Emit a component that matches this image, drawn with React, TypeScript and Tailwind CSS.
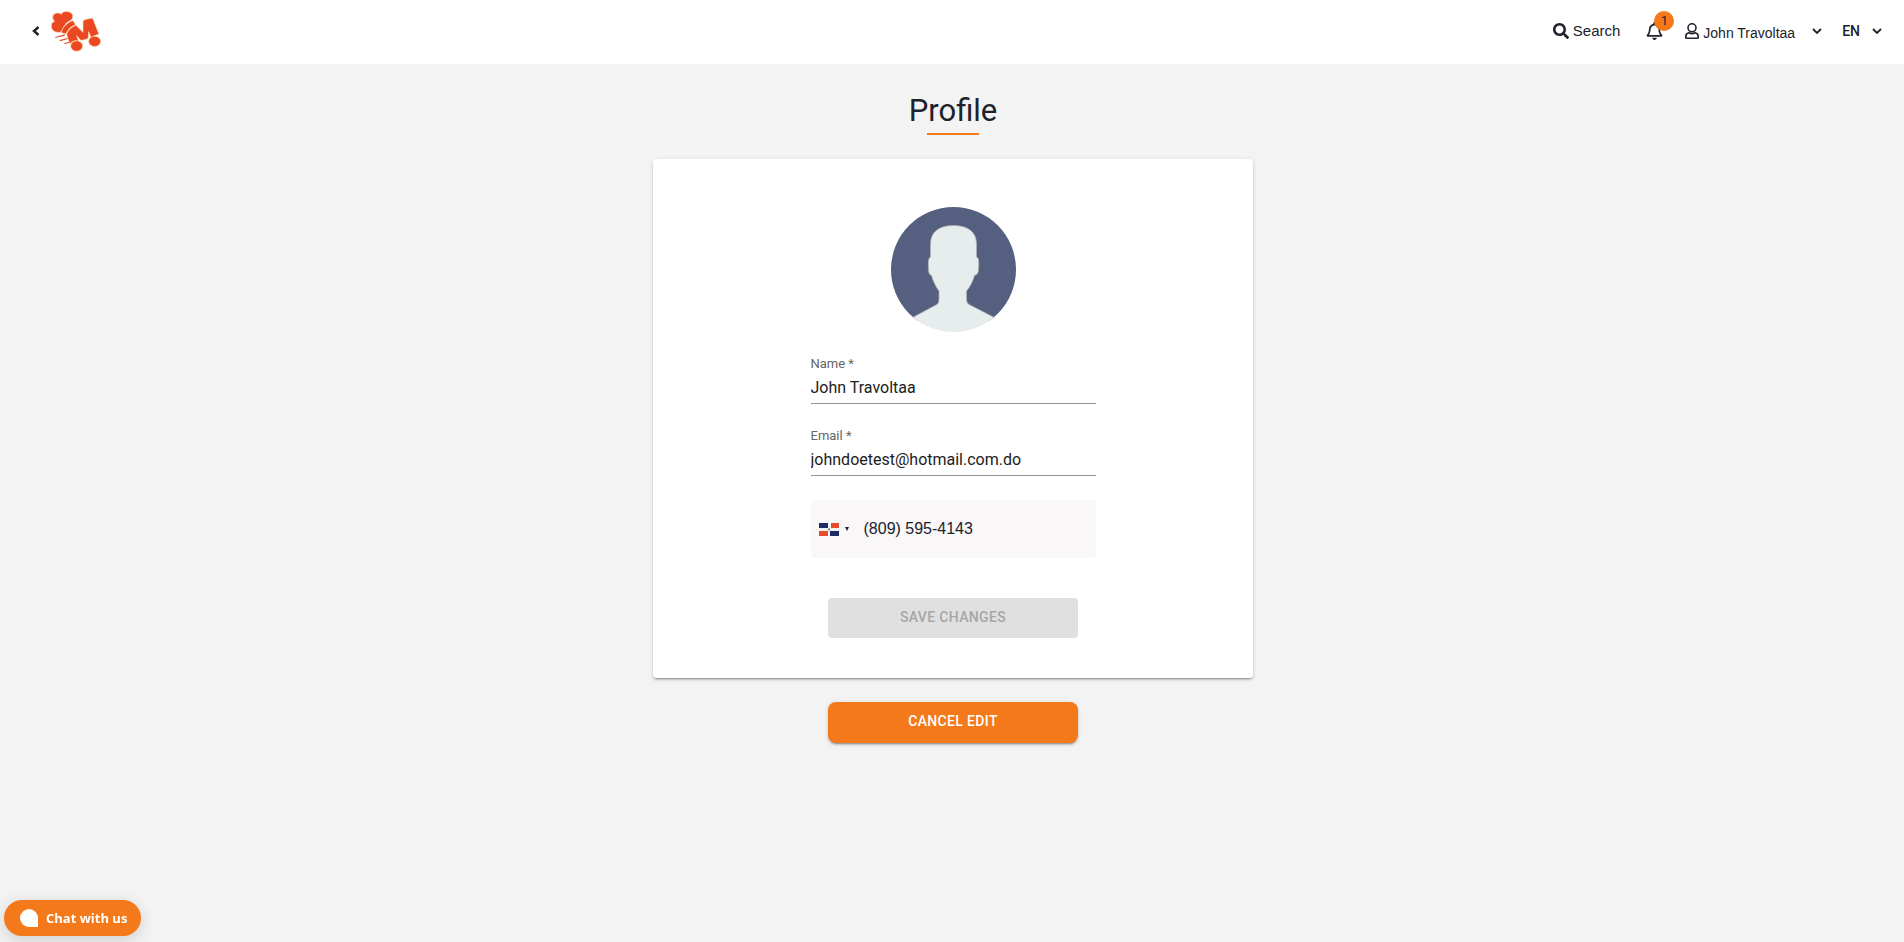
import React, { useState } from 'react';

const Caret = () => (
  <svg viewBox="0 0 10 6" className="h-[6px] w-[10px]" fill="none" stroke="#20222b" strokeWidth="1.800" aria-hidden="true">
    <path d="M1 1l4 4 4-4" />
  </svg>
);

const Logo = () => (
  <svg viewBox="0 0 150 123" className="h-[41px] w-[50px]" fill="#e94823" aria-hidden="true">
    <g stroke="#fbdcae" strokeWidth="2" strokeLinejoin="round">
      <path d="M6 24C2 12 12 5 22 6C26 6 29 8 31 10C33 3 42 0 50 2C60 3 67 9 65 18C64 24 61 27 57 29L46 36L38 48C34 57 31 62 27 64C14 65 3 60 1 48C0 39 4 33 11 31C8 29 7 27 6 24Z" />
      <path d="M31 63C35 49 47 36 64 29C69 32 71 35 73 41C60 46 51 55 45 68C38 68 34 67 31 63Z" />
      <path d="M47 69C51 59 62 47 75 43L96 64L96 30C98 27 106 25 120 22C125 21 127 24 128 29L144 70C133 72 126 76 121 82L113 62L112 82C104 86 96 88 89 88L77 74L83 91C72 87 63 91 57 98C52 88 49 78 47 69Z" />
      <ellipse cx="77" cy="105" rx="18" ry="15.500" />
      <ellipse cx="131" cy="91" rx="18" ry="15.500" />
    </g>
    <path d="M13 78l29-8-1 4-28 7zM26 87l24-6-1 4-23 6zM40 96l14-3 1 3-14 3z" />
  </svg>
);

const Avatar = () => (
  <svg viewBox="0 0 125 125" className="mx-auto block size-[125px]" role="img" aria-label="Profile photo">
    <clipPath id="disc">
      <circle cx="62.500" cy="62.500" r="62.500" />
    </clipPath>
    <g clipPath="url(#disc)">
      <path fill="#556080" d="M0 0h125v114H0z" />
      <path
        d="M39.500 50V37C39.500 25 48 18.500 62.500 18.500S85.500 25 85.500 37V50C88 51 88 54 87.500 62C87.500 66 86 68 83.500 68.500C82 74 79 80 75.500 84V92C75.500 96 77 97 80 98.500L110 114V130H15V114L44 98.500C47 97 48 96 48 92V84C45 80 42 74 40.500 68.500C38.500 68 37.500 66 37.500 62C37 54 37.500 51 39.500 50Z"
        fill="#e7eced"
        stroke="#b3b3b0"
        strokeWidth=".7"
      />
    </g>
  </svg>
);

const Flag = () => (
  <svg viewBox="0 0 20 13" className="h-[13px] w-[20px]" aria-hidden="true">
    <path fill="#f3f1f0" d="M0 0h20v13H0z" />
    <path fill="#1e2b69" d="M0 0h9v5H0zM11 8h9v5h-9z" />
    <path fill="#e94c2b" d="M12 0h8v5h-8zM0 8h9v5H0z" />
    <path fill="#70806c" d="M9.300 5.500h1.700v2H9.300z" />
  </svg>
);

type FieldProps = { id: string; label: string; type: string; value: string; onChange: (v: string) => void };

const Field = ({ id, label, type, value, onChange }: FieldProps) => (
  <div className="mb-6 h-12 border-b border-[#949494]">
    <label htmlFor={id} className="block text-[13px] leading-4 text-[#666]">
      {label} *
    </label>
    <input
      id={id}
      type={type}
      value={value}
      onChange={(e) => onChange(e.target.value)}
      className="mt-1 block h-6 w-full bg-transparent text-base text-[#212121] outline-none"
    />
  </div>
);

export default function App() {
  const [name, setName] = useState('John Travoltaa');
  const [email, setEmail] = useState('johndoetest@hotmail.com.do');
  const [phone, setPhone] = useState('(809) 595-4143');

  return (
    <div className="flex min-h-screen flex-col bg-[#f3f3f3] font-['Roboto',sans-serif] text-[#20222b]">
      <header className="flex h-16 items-center justify-between bg-white pr-[22px] pb-[2px] pl-8">
        <div className="flex items-center gap-[11px]">
          <button type="button" aria-label="Back">
            <svg viewBox="0 0 8 10" className="h-[10px] w-[8px]" fill="none" stroke="#20222b" strokeWidth="2.400" aria-hidden="true">
              <path d="M6.500 1L2 5l4.500 4" />
            </svg>
          </button>
          <a href="#" aria-label="Home">
            <Logo />
          </a>
        </div>
        <nav className="flex items-center font-['Liberation_Sans',sans-serif]">
          <button type="button" className="flex items-center gap-1 text-[15px]">
            <svg viewBox="0 0 512 512" className="size-4" fill="currentColor" aria-hidden="true">
              <path d="M505 442.700L405.300 343c-4.500-4.500-10.600-7-17-7H372c27.600-35.300 44-79.700 44-128C416 93.100 322.900 0 208 0S0 93.100 0 208s93.100 208 208 208c48.300 0 92.700-16.400 128-44v16.300c0 6.400 2.500 12.500 7 17l99.700 99.700c9.400 9.400 24.600 9.400 33.900 0l28.300-28.300c9.400-9.400 9.400-24.600.1-34zM208 336c-70.700 0-128-57.200-128-128 0-70.700 57.200-128 128-128 70.700 0 128 57.200 128 128 0 70.700-57.200 128-128 128z" />
            </svg>
            Search
          </button>
          <button type="button" aria-label="Notifications" className="relative ml-[26px]">
            <svg viewBox="0 0 448 512" className="h-[18px] w-[17px]" fill="currentColor" aria-hidden="true">
              <path d="M439.390 362.290c-19.320-20.760-55.470-51.990-55.470-154.290 0-77.700-54.480-139.900-127.940-155.160V32c0-17.670-14.320-32-31.980-32s-31.980 14.330-31.980 32v20.840C118.560 68.100 64.080 130.300 64.080 208c0 102.300-36.150 133.530-55.470 154.290-6 6.450-8.660 14.160-8.610 21.710.11 16.400 12.980 32 32.100 32h383.800c19.120 0 32-15.600 32.100-32 .05-7.550-2.610-15.270-8.610-21.710zM67.530 368c21.220-27.970 44.420-74.330 44.530-159.420 0-.2-.06-.38-.06-.58 0-61.860 50.140-112 112-112s112 50.140 112 112c0 .2-.06.38-.06.58.11 85.100 23.310 131.460 44.530 159.420H67.530zM224 512c35.320 0 63.970-28.650 63.970-64H160.030c0 35.350 28.650 64 63.970 64z" />
            </svg>
            <span className="absolute -top-[11px] left-[8px] flex size-5 items-center justify-center rounded-full bg-[#f4791b] font-['Roboto',sans-serif] text-[13px]">1</span>
          </button>
          <button type="button" className="ml-[22px] flex items-center gap-1 text-sm">
            <svg viewBox="0 0 14 16" className="h-4 w-[14px]" fill="none" stroke="currentColor" strokeWidth="1.600" aria-hidden="true">
              <circle cx="7" cy="4.800" r="4" />
              <path d="M3.800 9.800C2 10.300.8 11.600.8 13.300v1.200c0 .5.200.7.700.7h11c.5 0 .7-.2.700-.7v-1.200c0-1.700-1.200-3-3-3.500C8.500 10.700 5.500 10.700 3.800 9.800z" />
            </svg>
            <span className="pt-1">John Travoltaa</span>
            <span className="ml-[13px]">
              <Caret />
            </span>
          </button>
          <button type="button" className="ml-5 flex items-center gap-3 font-['Roboto',sans-serif] text-sm font-medium">
            EN
            <Caret />
          </button>
        </nav>
      </header>

      <main className="flex flex-col items-center pt-7 pr-4 pl-[18px]">
        <h1 className="text-[31px] leading-[38px]">Profile</h1>
        <div className="mt-[3px] h-[2px] w-[52px] bg-[#f4791b]" />

        <form
          className="mt-6 w-full max-w-[600px] rounded bg-white pt-12 pb-10 shadow-[0_3px_1px_-2px_rgba(0,0,0,0.2),0_2px_2px_0_rgba(0,0,0,0.14),0_1px_5px_0_rgba(0,0,0,0.12)]"
          onSubmit={(e) => e.preventDefault()}
        >
          <Avatar />
          <div className="mx-auto mt-6 w-[285px]">
            <Field id="name" label="Name" type="text" value={name} onChange={setName} />
            <Field id="email" label="Email" type="email" value={email} onChange={setEmail} />
            <div className="flex h-[58px] items-center rounded bg-[#f9f7f8] pl-2">
              <button type="button" aria-label="Country: Dominican Republic" className="flex items-center gap-[6px]">
                <Flag />
                <svg viewBox="0 0 4 4" className="size-1" fill="#20222b" aria-hidden="true">
                  <path d="M0 0h4L2 4z" />
                </svg>
              </button>
              <input
                type="tel"
                aria-label="Phone number"
                value={phone}
                onChange={(e) => setPhone(e.target.value)}
                className="ml-[15px] h-10 min-w-0 flex-1 bg-transparent font-['Liberation_Sans',sans-serif] text-base outline-none"
              />
            </div>
          </div>
          <button type="submit" disabled className="mx-auto mt-10 block h-10 w-[250px] rounded bg-[#e0e0e0] pb-[2px] text-sm font-medium tracking-wide text-[#a6a6a6]">
            SAVE CHANGES
          </button>
        </form>

        <button
          type="button"
          className="mt-6 h-[41px] w-[250px] rounded-lg bg-[#f4791b] pb-[3px] text-sm font-medium tracking-wide text-white shadow-[0_3px_1px_-2px_rgba(0,0,0,0.2),0_2px_2px_0_rgba(0,0,0,0.14),0_1px_5px_0_rgba(0,0,0,0.12)]"
        >
          CANCEL EDIT
        </button>
      </main>

      <button
        type="button"
        className="fixed bottom-[6px] left-1 flex h-9 items-center gap-2 rounded-full bg-[#f4791b] pr-[14px] pl-4 font-['Open_Sans',sans-serif] text-[13px] font-bold text-white shadow-[0_4px_16px_rgba(0,0,0,0.15)]"
      >
        <span className="size-[18px] rounded-full rounded-br-none bg-white" />
        <span className="pt-[2px]">Chat with us</span>
      </button>
    </div>
  );
}
